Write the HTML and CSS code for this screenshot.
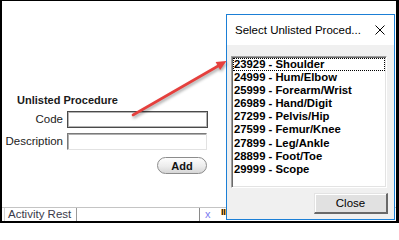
FILE: index.html
```html
<!DOCTYPE html>
<html>
<head>
<meta charset="utf-8">
<link rel="stylesheet" href="styles.css">
</head>
<body>
<div class="frame">
  <div class="form">
    <div class="heading">Unlisted Procedure</div>
    <div class="fields">
      <label class="lbl">Code</label>
      <div class="input code"></div>
      <label class="lbl">Description</label>
      <div class="input desc"></div>
      <div class="actions"><button class="add">Add</button></div>
    </div>
  </div>
  <div class="statusbar">
    <div class="tab">Activity Rest</div>
    <div class="spacer"></div>
    <div class="xcell">x</div>
    <div class="mini-icon"></div>
  </div>
</div>

<div class="dialog">
  <div class="titlebar">
    <span class="title">Select Unlisted Proced...</span>
    <svg class="xbtn" width="10" height="10" viewBox="0 0 10 10"><path d="M0.5 0.5 L9.5 9.5 M9.5 0.5 L0.5 9.5" stroke="#000" stroke-width="1" fill="none"/></svg>
  </div>
  <div class="dbody">
    <ul class="listbox">
      <li class="item focus">23929 - Shoulder</li>
      <li class="item">24999 - Hum/Elbow</li>
      <li class="item">25999 - Forearm/Wrist</li>
      <li class="item">26989 - Hand/Digit</li>
      <li class="item">27299 - Pelvis/Hip</li>
      <li class="item">27599 - Femur/Knee</li>
      <li class="item">27899 - Leg/Ankle</li>
      <li class="item">28899 - Foot/Toe</li>
      <li class="item">29999 - Scope</li>
    </ul>
    <div class="dfoot"><button class="close">Close</button></div>
  </div>
</div>

<svg class="arrow" width="399" height="223" viewBox="0 0 399 223">
  <line x1="133" y1="115" x2="219" y2="65.5" stroke="#e5403d" stroke-width="2.6" stroke-linecap="round"/>
  <polygon points="226.5,61 220.1,69.9 215.6,62.1" fill="#e5403d"/>
</svg>
</body>
</html>
```

FILE: styles.css
```css
body {
  margin: 0;
  width: 399px;
  height: 223px;
  overflow: hidden;
  position: relative;
  background: #fff;
  font-family: "Liberation Sans", Arial, sans-serif;
}

.frame {
  box-sizing: border-box;
  width: 399px;
  height: 223px;
  border-style: solid;
  border-color: #000;
  border-width: 1px 3px 2px 2px;
  display: flex;
  flex-direction: column;
  background: #fff;
}

.form {
  padding-top: 93px;
}

.heading {
  margin-left: 15px;
  font-weight: bold;
  font-size: 11px;
  line-height: 13px;
  color: #1a1a1a;
}

.fields {
  margin-top: 4px;
  display: grid;
  grid-template-columns: 61px 141px;
  column-gap: 4px;
  row-gap: 5px;
}

.lbl {
  font-size: 11.5px;
  color: #222;
  text-align: right;
  align-self: center;
  line-height: 13px;
}

.input {
  height: 17px;
  box-sizing: border-box;
  background: #fff;
}

.code {
  border: 1px solid #4a4a4a;
  box-shadow: inset 0 0 0 1px #b4b4b4;
}

.desc {
  border-style: solid;
  border-width: 1px;
  border-color: #7a7a7a #e2e2e2 #e2e2e2 #7a7a7a;
  box-shadow: inset 1px 1px 0 #b0b0b0;
  width: 140px;
}

.actions {
  grid-column: 2;
  display: flex;
  justify-content: flex-end;
  margin-top: 2px;
  padding-right: 1px;
}

.add {
  width: 50px;
  height: 17px;
  box-sizing: border-box;
  padding: 0;
  border: 1px solid #8c8c8c;
  border-radius: 9px;
  background: linear-gradient(#fdfdfd, #ececec 55%, #d6d6d6);
  font-family: "Liberation Sans", Arial, sans-serif;
  font-weight: bold;
  font-size: 11px;
  color: #111;
}

.statusbar {
  margin-top: auto;
  height: 13px;
  border-top: 1px solid #c4c4c4;
  display: flex;
  padding-left: 2px;
}

.tab {
  box-sizing: border-box;
  width: 73px;
  border-left: 1px solid #d4d4d4;
  border-right: 1px solid #9a9a9a;
  padding-left: 3px;
  font-size: 11.5px;
  line-height: 12px;
  color: #3a3a4a;
}

.spacer {
  width: 122px;
}

.xcell {
  box-sizing: border-box;
  width: 22px;
  border-left: 1px solid #8a8a8a;
  padding-left: 5px;
  font-size: 11px;
  line-height: 13px;
  color: #7c7cf0;
}

.mini-icon {
  width: 5px;
  height: 6px;
  margin-top: 1px;
  background: linear-gradient(90deg, #e8a33c 0 1px, #333 1px 2px, #e8a33c 2px 3px, #333 3px 4px, #e8a33c 4px 5px);
}

.dialog {
  position: absolute;
  left: 226px;
  top: 14px;
  width: 169px;
  height: 206px;
  box-sizing: border-box;
  border: 1px solid #1b7fd6;
  background: #f0f0f0;
  display: flex;
  flex-direction: column;
}

.titlebar {
  height: 30px;
  background: #fff;
  display: flex;
  align-items: center;
  justify-content: space-between;
  padding: 0 9px 0 8px;
}

.title {
  font-size: 11.5px;
  color: #000;
}

.xbtn {
  display: block;
}

.dbody {
  flex: 1;
  display: flex;
  flex-direction: column;
  padding: 11px 7px 5px 4px;
}

.listbox {
  margin: 0;
  padding: 0;
  list-style: none;
  box-sizing: border-box;
  height: 132px;
  background: #fff;
  border-style: solid;
  border-width: 1px;
  border-color: #a0a0a0 #fff #fff #a0a0a0;
  box-shadow: inset 1px 1px 0 #6a6a6a, inset -1px -1px 0 #e3e3e3;
  padding: 1px;
}

.item {
  font-weight: bold;
  font-size: 11.3px;
  line-height: 13.1px;
  padding-left: 1px;
  color: #000;
  white-space: nowrap;
}

.focus {
  outline: 1px dotted #000;
  outline-offset: -1px;
}

.dfoot {
  margin-top: auto;
  display: flex;
  justify-content: flex-end;
}

.close {
  width: 74px;
  height: 21px;
  box-sizing: border-box;
  margin-right: -1px;
  padding: 0;
  border-style: solid;
  border-width: 1px 2px 2px 1px;
  border-color: #e3e3e3 #696969 #696969 #e3e3e3;
  box-shadow: inset 1px 1px 0 #fff;
  background: #e1e1e1;
  font-family: "Liberation Sans", Arial, sans-serif;
  font-size: 11.5px;
  color: #000;
}

.arrow {
  position: absolute;
  left: 0;
  top: 0;
  pointer-events: none;
  filter: drop-shadow(1px 2px 1.5px rgba(0, 0, 0, 0.35));
}
```
